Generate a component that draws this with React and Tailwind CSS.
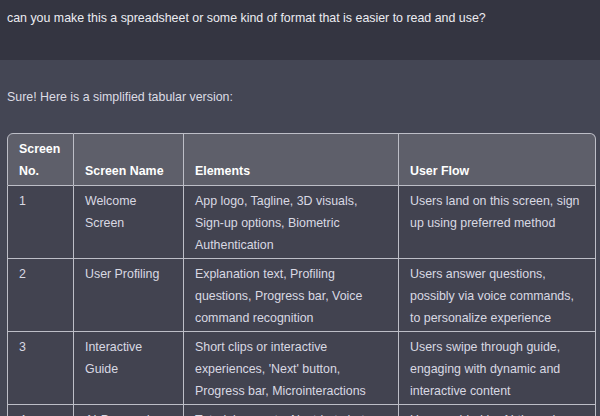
import React from "react";

const rows = [
  {
    no: "1",
    name: "Welcome Screen",
    elements: "App logo, Tagline, 3D visuals, Sign-up options, Biometric Authentication",
    flow: "Users land on this screen, sign up using preferred method",
  },
  {
    no: "2",
    name: "User Profiling",
    elements: "Explanation text, Profiling questions, Progress bar, Voice command recognition",
    flow: "Users answer questions, possibly via voice commands, to personalize experience",
  },
  {
    no: "3",
    name: "Interactive Guide",
    elements: "Short clips or interactive experiences, 'Next' button, Progress bar, Microinteractions",
    flow: "Users swipe through guide, engaging with dynamic and interactive content",
  },
  {
    no: "4",
    name: "AI-Powered Assistance",
    elements: "Tutorial prompts, Next-bot chat window, Help icon",
    flow: "Users guided by AI through app features",
  },
];

const cell = "border-r border-b border-[#bdbec7] pl-[11px] pr-[12px]";
const head = `${cell} border-t pt-[4px] pb-[3px] bg-[#5e5f6a] font-bold text-white flex items-end`;
const body = `${cell} pt-[4px] pb-[2px] bg-[#424350] text-[#d9d9e3]`;

export default function App() {
  return (
    <div className="w-[600px] h-[416px] overflow-hidden bg-[#444654] font-['Liberation_Sans',Arial,sans-serif] text-[12.4px] text-[#ececf1]">
      {/* user message */}
      <div className="h-[60px] bg-[#343541] px-[7px] pt-[8px] leading-5">
        can you make this a spreadsheet or some kind of format that is easier to read and use?
      </div>

      {/* assistant message */}
      <div className="px-[7px] pt-[27px]">
        <p className="leading-5 text-[#dcdce4]">Sure! Here is a simplified tabular version:</p>

        <div className="mt-[26px] grid grid-cols-[67px_110px_215px_197px] leading-[22px]">
          <div className={`${head} border-l rounded-tl-[6px]`}>Screen No.</div>
          <div className={head}>Screen Name</div>
          <div className={head}>Elements</div>
          <div className={`${head} rounded-tr-[6px]`}>User Flow</div>

          {rows.map((r) => (
            <React.Fragment key={r.no}>
              <div className={`${body} border-l`}>{r.no}</div>
              <div className={body}>{r.name}</div>
              <div className={body}>{r.elements}</div>
              <div className={body}>{r.flow}</div>
            </React.Fragment>
          ))}
        </div>
      </div>
    </div>
  );
}
